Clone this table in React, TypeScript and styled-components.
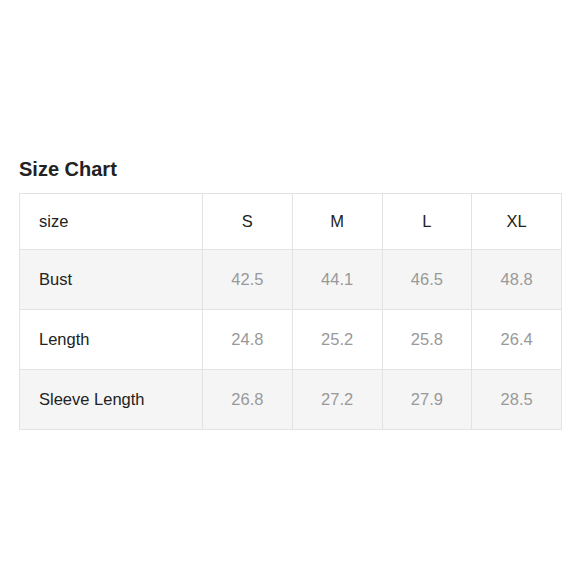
import { ReactElement } from "react";

import styled, { createGlobalStyle } from "styled-components";

const GlobalStyle = createGlobalStyle`
  body {
    margin: 0;
    background: #fff;
    font-family: "Liberation Sans", Arial, sans-serif;
  }
`;

interface Row {
  label: string;
  values: string[];
}

const sizes = ["S", "M", "L", "XL"];

const rows: Row[] = [
  { label: "Bust", values: ["42.5", "44.1", "46.5", "48.8"] },
  { label: "Length", values: ["24.8", "25.2", "25.8", "26.4"] },
  { label: "Sleeve Length", values: ["26.8", "27.2", "27.9", "28.5"] },
];

const Page = styled.div`
  width: 580px;
  height: 580px;
  box-sizing: border-box;
  padding: 157px 18px 0 19px;
`;

const Title = styled.h2`
  margin: 0 0 12px;
  font-size: 20px;
  font-weight: 700;
  color: #222;
  line-height: 24px;
`;

const Table = styled.table`
  width: 543px;
  border-collapse: collapse;
  table-layout: fixed;
  font-size: 16.5px;
`;

const Tr = styled.tr<{ shaded?: boolean; head?: boolean }>`
  height: ${({ head }) => (head ? "56px" : "60px")};
  background: ${({ shaded }) => (shaded ? "#f5f5f5" : "#fff")};
`;

const Cell = styled.td<{ first?: boolean; muted?: boolean }>`
  border: 1px solid #e3e3e3;
  padding: 0 0 0 ${({ first }) => (first ? "19px" : "0")};
  text-align: ${({ first }) => (first ? "left" : "center")};
  color: ${({ muted }) => (muted ? "#999" : "#222")};
  width: ${({ first }) => (first ? "163px" : "auto")};
`;

const App = (): ReactElement => (
  <Page>
    <GlobalStyle />
    <Title>Size Chart</Title>
    <Table>
      <tbody>
        <Tr head>
          <Cell first>size</Cell>
          {sizes.map((s) => (
            <Cell key={s}>{s}</Cell>
          ))}
        </Tr>
        {rows.map((row, i) => (
          <Tr key={row.label} shaded={i % 2 === 0}>
            <Cell first>{row.label}</Cell>
            {row.values.map((v, j) => (
              <Cell key={j} muted>
                {v}
              </Cell>
            ))}
          </Tr>
        ))}
      </tbody>
    </Table>
  </Page>
);

export default App;
